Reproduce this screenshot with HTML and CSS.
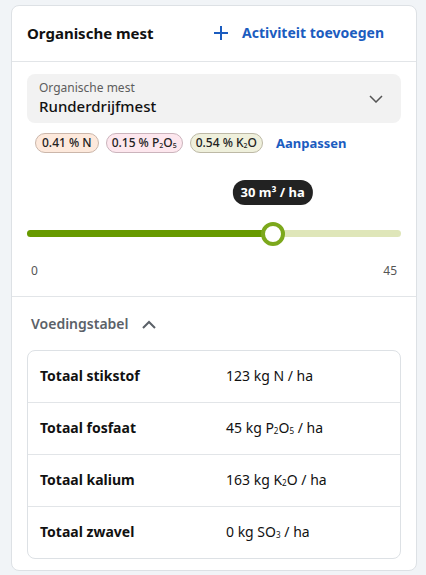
FILE: index.html
```html
<!DOCTYPE html>
<html lang="nl">
<head>
<meta charset="utf-8">
<link rel="stylesheet" href="styles.css">
</head>
<body>
<div class="card">
  <div class="card-header">
    <h2 class="title">Organische mest</h2>
    <a class="action">
      <svg class="plus" width="14" height="14" viewBox="0 0 14 14"><path d="M7 0V14M0 7H14" stroke="currentColor" stroke-width="2"/></svg>
      <span>Activiteit toevoegen</span>
    </a>
  </div>
  <div class="section">
    <div class="select">
      <div class="select-text">
        <div class="select-label">Organische mest</div>
        <div class="select-value">Runderdrijfmest</div>
      </div>
      <svg class="chev" width="14" height="8" viewBox="0 0 14 8"><path d="M1 1L7 7L13 1" fill="none" stroke="#555" stroke-width="1.5"/></svg>
    </div>
    <div class="chips">
      <span class="chip chip-n">0.41 % N</span>
      <span class="chip chip-p">0.15 % P<sub>2</sub>O<sub>5</sub></span>
      <span class="chip chip-k">0.54 % K<sub>2</sub>O</span>
      <a class="link">Aanpassen</a>
    </div>
    <div class="slider">
      <div class="track">
        <div class="fill" style="width: calc(11px + (100% - 22px) * 0.6667)"></div>
        <div class="thumb" style="left: calc(11px + (100% - 22px) * 0.6667)">
          <div class="tooltip">30 m³ / ha</div>
        </div>
      </div>
      <div class="range"><span>0</span><span>45</span></div>
    </div>
  </div>
  <div class="section section-table">
    <div class="toggle">
      <span>Voedingstabel</span>
      <svg width="14" height="9" viewBox="0 0 14 9"><path d="M1 8L7 2L13 8" fill="none" stroke="#5b6168" stroke-width="2"/></svg>
    </div>
    <div class="table">
      <div class="row"><span class="lbl">Totaal stikstof</span><span class="val">123 kg N / ha</span></div>
      <div class="row"><span class="lbl">Totaal fosfaat</span><span class="val">45 kg P<sub>2</sub>O<sub>5</sub> / ha</span></div>
      <div class="row"><span class="lbl">Totaal kalium</span><span class="val">163 kg K<sub>2</sub>O / ha</span></div>
      <div class="row"><span class="lbl">Totaal zwavel</span><span class="val">0 kg SO<sub>3</sub> / ha</span></div>
    </div>
  </div>
</div>
</body>
</html>
```
FILE: styles.css
```css
* { box-sizing: border-box; }
html, body { margin: 0; }
body {
  background: #f1f4f7;
  font-family: "Noto Sans", "Open Sans", sans-serif;
  color: #111;
  padding: 5px 9px 4px 11px;
}
.card {
  background: #fff;
  border: 1px solid #dde1e5;
  border-radius: 8px;
  height: 566px;
}
.card-header {
  height: 56px;
  display: flex;
  align-items: center;
  justify-content: space-between;
  padding: 0 32px 2px 15px;
  border-bottom: 1px solid #e2e5e8;
}
.title {
  margin: 0;
  font-size: 15px;
  font-weight: 700;
  color: #111;
}
.action {
  display: flex;
  align-items: center;
  gap: 14px;
  color: #1b5cbf;
  font-size: 14px;
  font-weight: 700;
}
.plus { display: block; }
.section {
  padding: 12px 15px 0;
  border-bottom: 1px solid #e2e5e8;
}
.select {
  height: 49px;
  background: #f2f2f2;
  border-radius: 8px;
  display: flex;
  align-items: center;
  justify-content: space-between;
  padding: 0 18px 0 12px;
}
.select-label {
  font-size: 12px;
  color: #5d5d5d;
  line-height: 14px;
  margin-top: -2px;
  margin-bottom: 2px;
}
.select-value {
  font-size: 15px;
  font-weight: 500;
  color: #111;
  line-height: 18px;
}
.chev { display: block; }
.chips {
  display: flex;
  align-items: center;
  gap: 7px;
  padding-left: 8px;
  margin-top: 10px;
}
.chip {
  font-size: 12px;
  font-weight: 500;
  line-height: 18px;
  padding: 0 6px;
  border-radius: 10px;
  border: 1px solid #c6b3a8;
  color: #222;
  white-space: nowrap;
}
.chip sub, .val sub { font-size: 0.58em; vertical-align: -0.15em; line-height: 0; }
.chip-p, .chip-k { padding: 0 5px; }
.chip-n { background: #fde9dc; border-color: #cbb6aa; }
.chip-p { background: #fde7ee; border-color: #cbb4bc; }
.chip-k { background: #eff0dc; border-color: #bdb9a6; }
.link {
  margin-left: 6px;
  color: #1b5cbf;
  font-size: 13px;
  font-weight: 700;
}
.slider {
  padding-top: 77px;
}
.track {
  position: relative;
  height: 7px;
  border-radius: 4px;
  background: #dfe6b9;
}
.fill {
  height: 7px;
  border-radius: 4px;
  background: #679a00;
}
.thumb {
  position: absolute;
  top: 50%;
  width: 24px;
  height: 24px;
  margin: -12px 0 0 -12px;
  border-radius: 50%;
  background: #fff;
  border: 4px solid #7ca81c;
}
.tooltip {
  position: absolute;
  bottom: 37px;
  left: 50%;
  transform: translateX(-50%);
  background: #222;
  color: #fff;
  font-size: 13px;
  font-weight: 700;
  line-height: 25px;
  height: 25px;
  padding: 0 8px;
  border-radius: 12px;
  white-space: nowrap;
}
.range {
  display: flex;
  justify-content: space-between;
  font-size: 12px;
  color: #555;
  padding: 26px 4px 17px 4px;
  line-height: 16px;
}
.section-table {
  border-bottom: none;
  padding-top: 17px;
}
.toggle {
  display: flex;
  align-items: center;
  gap: 13px;
  padding-left: 4px;
  font-size: 14px;
  font-weight: 600;
  color: #5b6168;
  line-height: 20px;
}
.toggle svg { display: block; }
.table {
  margin-top: 16px;
  border: 1px solid #dde1e5;
  border-radius: 8px;
}
.row {
  height: 52px;
  display: grid;
  grid-template-columns: 186px 1fr;
  align-items: center;
  padding: 0 12px 2px;
  border-top: 1px solid #e2e5e8;
}
.row:first-child { border-top: none; height: 51px; }
.lbl { font-size: 14px; font-weight: 700; color: #111; }
.val { font-size: 14px; color: #111; }
```
